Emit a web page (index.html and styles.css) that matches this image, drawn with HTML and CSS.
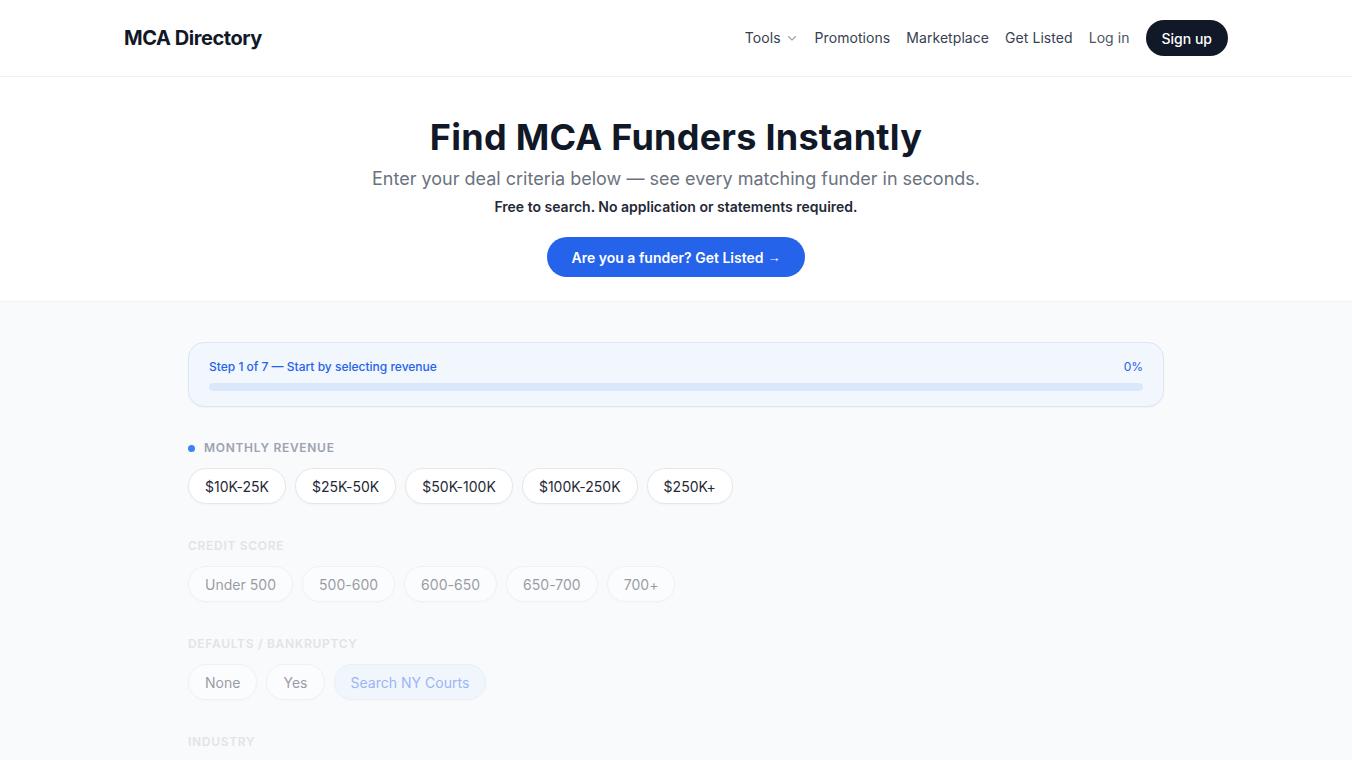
FILE: index.html
```html
<!DOCTYPE html>
<html lang="en">
<head>
  <meta charset="UTF-8" />
  <meta name="viewport" content="width=device-width, initial-scale=1.0" />
  <title>MCA Directory</title>
  <link rel="stylesheet" href="styles.css">
</head>
<body>
  <header class="site-header">
    <div class="header-inner">
      <a href="#" class="logo">MCA Directory</a>
      <nav class="nav">
        <a href="#" class="nav-link">Tools
          <svg class="chevron" width="14" height="14" viewBox="0 0 14 14" fill="none" stroke="currentColor" stroke-width="1.1" stroke-linecap="round" stroke-linejoin="round"><path d="M3.5 5.5l3.5 3.5 3.5-3.5"/></svg>
        </a>
        <a href="#" class="nav-link">Promotions</a>
        <a href="#" class="nav-link">Marketplace</a>
        <a href="#" class="nav-link">Get Listed</a>
        <a href="#" class="nav-link login">Log in</a>
        <a href="#" class="signup">Sign up</a>
      </nav>
    </div>
  </header>

  <section class="hero">
    <h1>Find MCA Funders Instantly</h1>
    <p class="subtitle">Enter your deal criteria below — see every matching funder in seconds.</p>
    <p class="note">Free to search. No application or statements required.</p>
    <a href="#" class="cta">Are you a funder? Get Listed <span class="arrow">→</span></a>
  </section>

  <main class="finder">
    <div class="finder-inner">
      <div class="progress-card">
        <div class="progress-top">
          <span>Step 1 of 7 — Start by selecting revenue</span>
          <span>0%</span>
        </div>
        <div class="progress-track"><div class="progress-fill" style="width: 0%"></div></div>
      </div>

      <div class="field active">
        <div class="field-label"><span class="dot"></span>Monthly Revenue</div>
        <div class="chips">
          <button class="chip">$10K-25K</button>
          <button class="chip">$25K-50K</button>
          <button class="chip">$50K-100K</button>
          <button class="chip">$100K-250K</button>
          <button class="chip">$250K+</button>
        </div>
      </div>

      <div class="field locked">
        <div class="field-label">Credit Score</div>
        <div class="chips">
          <button class="chip">Under 500</button>
          <button class="chip">500-600</button>
          <button class="chip">600-650</button>
          <button class="chip">650-700</button>
          <button class="chip">700+</button>
        </div>
      </div>

      <div class="field locked">
        <div class="field-label">Defaults / Bankruptcy</div>
        <div class="chips">
          <button class="chip">None</button>
          <button class="chip">Yes</button>
          <button class="chip chip-link">Search NY Courts</button>
        </div>
      </div>

      <div class="field locked">
        <div class="field-label">Industry</div>
      </div>
    </div>
  </main>
</body>
</html>
```

FILE: styles.css
```css
* {
  box-sizing: border-box;
}

body {
  margin: 0;
  font-family: Inter, 'Noto Sans', sans-serif;
  background: #f8fafc;
  color: #111827;
}

a {
  text-decoration: none;
  color: inherit;
}

.site-header {
  background: #fff;
  border-bottom: 1px solid #eef0f3;
}

.header-inner {
  max-width: 1104px;
  margin: 0 auto;
  height: 76px;
  display: flex;
  align-items: center;
  justify-content: space-between;
}

.logo {
  font-size: 20px;
  font-weight: 700;
  letter-spacing: -0.45px;
  color: #111827;
}

.nav {
  display: flex;
  align-items: center;
  gap: 16px;
}

.nav-link {
  font-size: 14px;
  line-height: 20px;
  letter-spacing: 0.06px;
  color: #374151;
  display: flex;
  align-items: center;
  gap: 4px;
  margin-top: -1px;
}

.nav-link.login {
  color: #4b5563;
}

.chevron {
  color: #9ca3af;
}

.signup {
  background: #111827;
  color: #fff;
  font-size: 14px;
  font-weight: 500;
  height: 36px;
  padding: 0 16px;
  border-radius: 999px;
  display: flex;
  align-items: center;
}

.hero {
  background: #fff;
  border-bottom: 1px solid #f1f3f6;
  text-align: center;
  padding: 40px 0 24px;
}

.hero h1 {
  margin: 0;
  font-size: 36px;
  line-height: 40px;
  font-weight: 700;
  letter-spacing: 0.25px;
  color: #111827;
}

.subtitle {
  margin: 8px 0 0;
  font-size: 18px;
  line-height: 28px;
  color: #6b7280;
}

.note {
  margin: 4px 0 0;
  font-size: 14px;
  line-height: 20px;
  font-weight: 600;
  color: #1f2937;
}

.cta {
  display: inline-flex;
  align-items: center;
  gap: 4px;
  margin-top: 20px;
  height: 40px;
  padding: 0 24px;
  border-radius: 999px;
  background: #2563eb;
  color: #fff;
  font-size: 14px;
  font-weight: 600;
}

.arrow {
  font-family: 'Liberation Sans', sans-serif;
  font-weight: 400;
  font-size: 13px;
}

.finder-inner {
  max-width: 976px;
  margin: 0 auto;
  padding: 40px 0 40px;
}

.progress-card {
  background: #f2f6fd;
  border: 1px solid #dce6f6;
  border-radius: 16px;
  padding: 15px 20px;
  box-shadow: 0 1px 2px rgba(15, 23, 42, 0.04);
}

.progress-top {
  display: flex;
  justify-content: space-between;
  height: 16px;
  margin-top: 1px;
  font-size: 12px;
  line-height: 16px;
  color: #2563eb;
  font-weight: 500;
}

.progress-top span:last-child {
  font-weight: 400;
}

.progress-track {
  margin-top: 8px;
  height: 8px;
  border-radius: 999px;
  background: #dbe7fb;
  overflow: hidden;
}

.progress-fill {
  height: 100%;
  background: #2563eb;
}

.field {
  margin-top: 33px;
}

.field + .field {
  margin-top: 34px;
}

.field-label {
  display: flex;
  align-items: center;
  gap: 9px;
  height: 16px;
  font-size: 12px;
  line-height: 16px;
  font-weight: 600;
  letter-spacing: 0.7px;
  text-transform: uppercase;
  color: #9ca3af;
}

.dot {
  width: 7px;
  height: 7px;
  border-radius: 50%;
  background: #3b82f6;
}

.chips {
  margin-top: 12px;
  display: flex;
  flex-wrap: wrap;
  gap: 9px;
}

.chip {
  height: 36px;
  padding: 0 16px;
  border-radius: 999px;
  border: 1px solid #e5e7eb;
  background: #fff;
  font-family: inherit;
  font-size: 14px;
  letter-spacing: 0.02px;
  color: #1f2937;
  box-shadow: 0 1px 2px rgba(15, 23, 42, 0.03);
  cursor: pointer;
}

.field.locked {
  opacity: 0.45;
}

.field.locked .field-label {
  color: #c4c9d1;
}

.field.locked .chip {
  cursor: not-allowed;
}

.chip-link {
  background: #eaf1fd;
  border-color: #d6e3fa;
  color: #2563eb;
}
```
